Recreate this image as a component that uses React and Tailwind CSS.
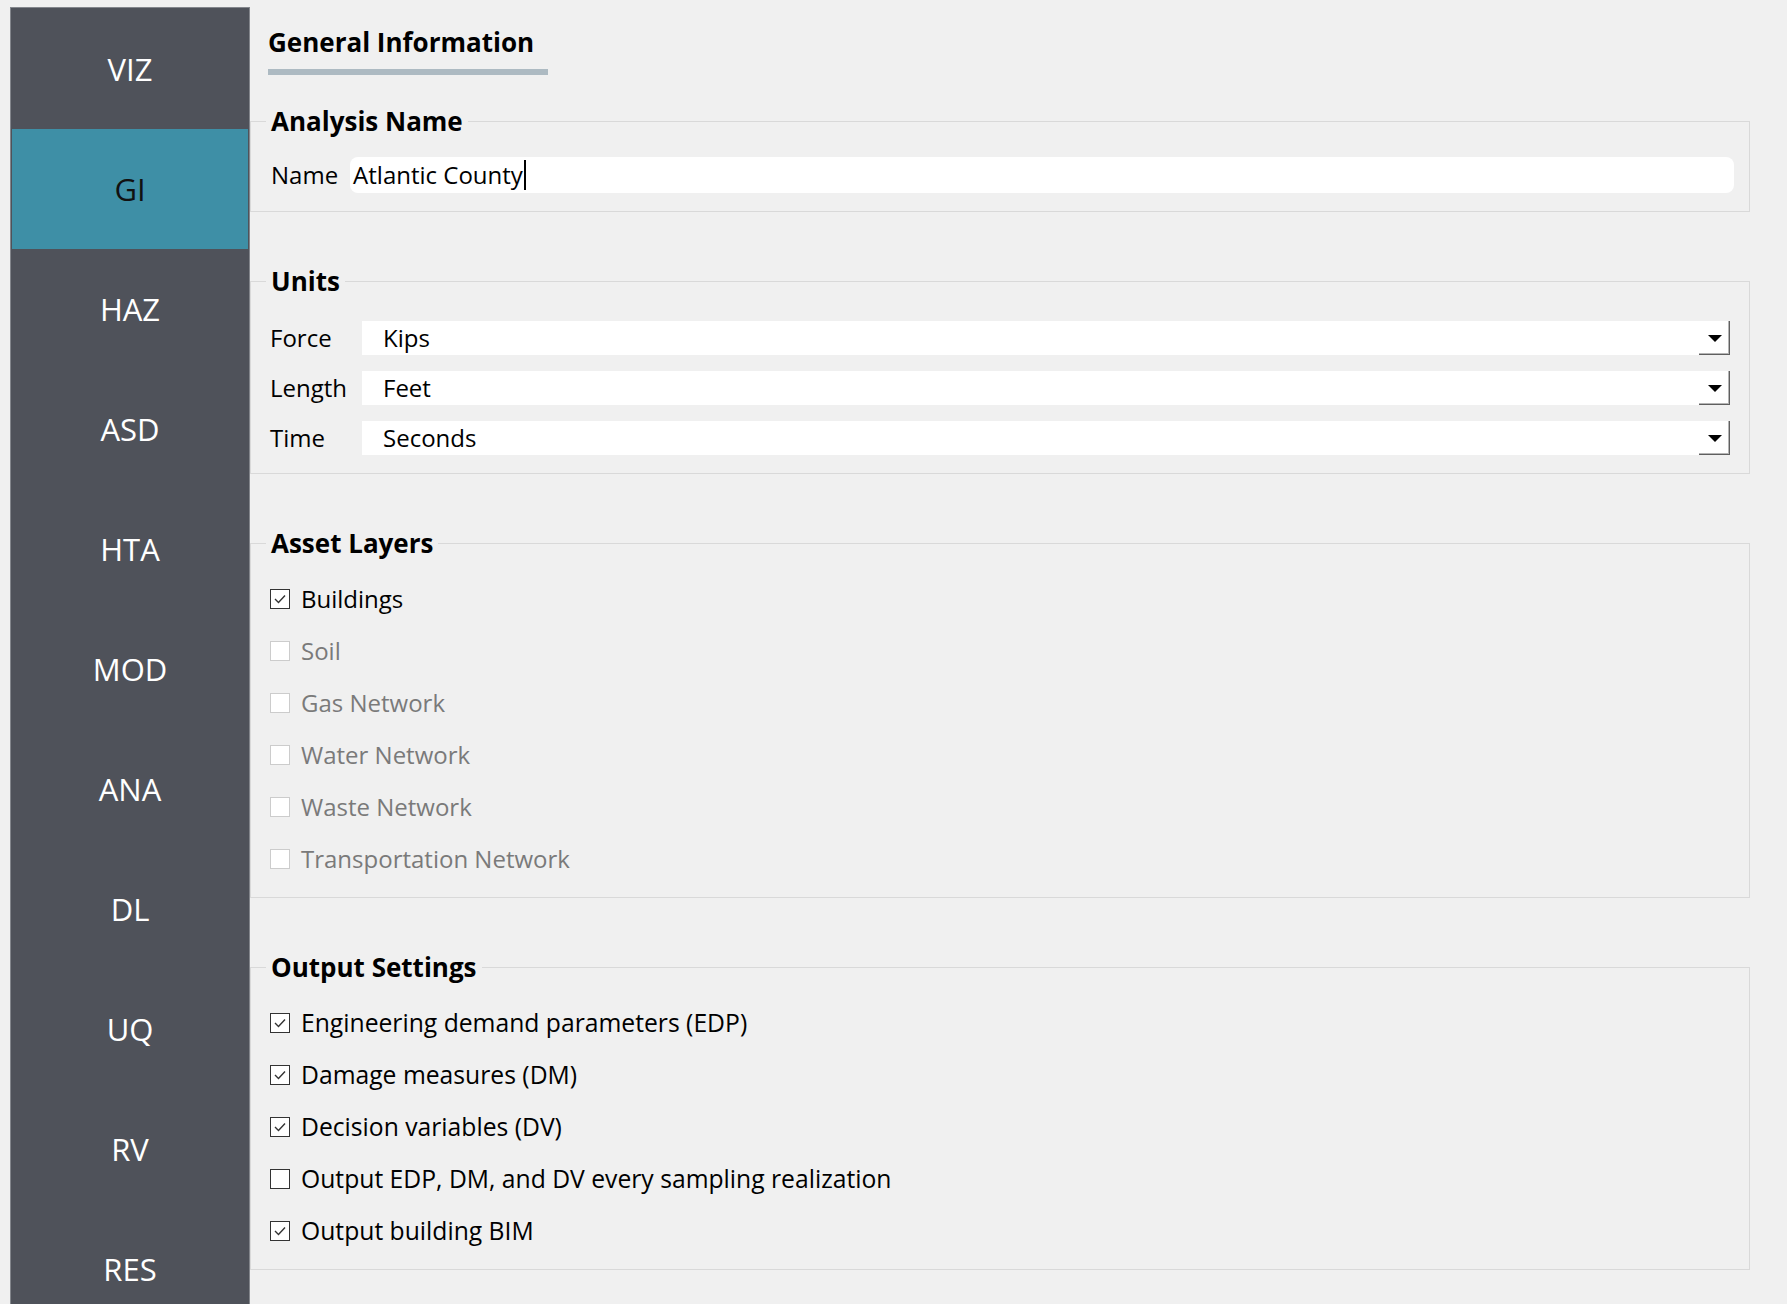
import React from 'react'

const NAV = ['VIZ', 'GI', 'HAZ', 'ASD', 'HTA', 'MOD', 'ANA', 'DL', 'UQ', 'RV', 'RES']

const UNITS = [
  { label: 'Force', value: 'Kips' },
  { label: 'Length', value: 'Feet' },
  { label: 'Time', value: 'Seconds' },
]

const ASSETS = [
  { label: 'Buildings', checked: true, disabled: false },
  { label: 'Soil', checked: false, disabled: true },
  { label: 'Gas Network', checked: false, disabled: true },
  { label: 'Water Network', checked: false, disabled: true },
  { label: 'Waste Network', checked: false, disabled: true },
  { label: 'Transportation Network', checked: false, disabled: true },
]

const OUTPUTS = [
  { label: 'Engineering demand parameters (EDP)', checked: true },
  { label: 'Damage measures (DM)', checked: true },
  { label: 'Decision variables (DV)', checked: true },
  { label: 'Output EDP, DM, and DV every sampling realization', checked: false },
  { label: 'Output building BIM', checked: true },
]

function Group({ title, children, className = '' }) {
  return (
    <fieldset className={`w-full border border-[#d9d9d9] px-[15px] ${className}`}>
      <legend className="px-[5px] text-[26px] font-bold leading-[30px] text-black">{title}</legend>
      {children}
    </fieldset>
  )
}

function CheckRow({ label, checked, disabled, wide }) {
  return (
    <div className="flex h-[32px] items-center gap-[11px]">
      <span
        className={`flex h-[20px] w-[20px] shrink-0 items-center justify-center border bg-white ${
          disabled ? 'border-[#cccccc]' : 'border-[#333333]'
        }`}
      >
        {checked && (
          <svg width="14" height="14" viewBox="0 0 14 14">
            <polyline points="2,7 5.5,10.5 12,3.5" fill="none" stroke="#333" strokeWidth="1.4" />
          </svg>
        )}
      </span>
      <span
        className={`leading-none ${wide ? 'text-[24.7px]' : 'text-[24px]'} ${
          disabled ? 'text-[#7a7a7a]' : 'text-black'
        }`}
      >
        {label}
      </span>
    </div>
  )
}

function Dropdown({ value }) {
  return (
    <div className="flex h-[34px] flex-1 items-center bg-white">
      <span className="flex-1 pl-[21px] text-[24px] leading-none text-black">{value}</span>
      <span className="flex h-full w-[31px] items-center justify-center shadow-[inset_-1px_-1px_0_#5f5f5f,inset_-2px_-2px_0_#b4b4b4]">
        <svg width="14" height="7" viewBox="0 0 14 7">
          <polygon points="0,0 14,0 7,7" fill="#000" />
        </svg>
      </span>
    </div>
  )
}

export default function App() {
  return (
    <div className="flex h-[1304px] overflow-hidden bg-[#f0f0f0] font-['Open_Sans',sans-serif]">
      <aside className="ml-[10px] mt-[7px] w-[240px] shrink-0 self-stretch overflow-hidden border border-b-0 border-[#83868c] bg-[#4f525a] p-px">
        {NAV.map((n) => (
          <div
            key={n}
            className={`flex h-[120px] items-center justify-center text-[31px] ${
              n === 'GI' ? 'bg-[#3e8fa6] text-[#111]' : 'text-white'
            }`}
          >
            {n}
          </div>
        ))}
      </aside>

      <main className="min-w-0 flex-1 pr-[37px]">
        <div className="pl-[18px] pt-[25px]">
          <div className="text-[26px] font-bold leading-[34px] text-black">General Information</div>
          <div className="mt-[10px] h-[6px] w-[280px] bg-[#adbac2]" />
        </div>

        <Group title="Analysis Name" className="mt-[31px] pb-[18px]">
          <div className="flex items-center gap-[12px] pl-[5px] pt-[21px]">
            <span className="text-[24px] leading-none text-black">Name</span>
            <div className="flex h-[36px] flex-1 items-center rounded-lg bg-white px-[3px]">
              <span className="text-[24px] leading-none text-black">Atlantic County</span>
              <span className="ml-px h-[30px] w-[2px] bg-black" />
            </div>
          </div>
        </Group>

        <Group title="Units" className="mt-[54px] pb-[18px]">
          <div className="flex flex-col gap-[16px] pl-[4px] pr-[4px] pt-[25px]">
            {UNITS.map((u) => (
              <div key={u.label} className="flex items-center">
                <span className="w-[92px] text-[24px] leading-none text-black">{u.label}</span>
                <Dropdown value={u.value} />
              </div>
            ))}
          </div>
        </Group>

        <Group title="Asset Layers" className="mt-[54px] pb-[22px]">
          <div className="flex flex-col gap-[20px] pl-[4px] pt-[25px]">
            {ASSETS.map((a) => (
              <CheckRow key={a.label} {...a} />
            ))}
          </div>
        </Group>

        <Group title="Output Settings" className="mt-[54px] pb-[22px]">
          <div className="flex flex-col gap-[20px] pl-[4px] pt-[25px]">
            {OUTPUTS.map((o) => (
              <CheckRow key={o.label} {...o} wide />
            ))}
          </div>
        </Group>
      </main>
    </div>
  )
}
